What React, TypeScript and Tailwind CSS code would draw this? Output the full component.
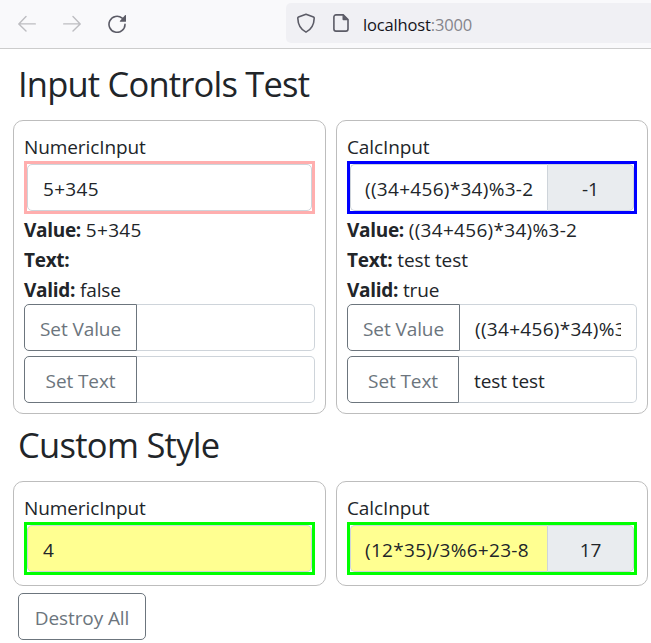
import type { ReactNode } from 'react';

function Toolbar() {
  return (
    <header className="flex h-[49px] border-b border-[#cccccc] bg-[#f9f9fb]">
      <div className="flex w-[286px] shrink-0 pl-[18px] pt-[15px]">
        <svg className="mr-[27px] h-[18px] w-[18px]" viewBox="0 0 18 18" fill="none" stroke="#bdbdc1" strokeWidth="1.4" strokeLinecap="round" strokeLinejoin="round">
          <path d="M17.3 8.9H.8M8 1.5.8 8.9 8 16.1" />
        </svg>
        <svg className="mr-[27px] h-[18px] w-[18px]" viewBox="0 0 18 18" fill="none" stroke="#bdbdc1" strokeWidth="1.4" strokeLinecap="round" strokeLinejoin="round">
          <path d="M.7 8.9h16.5M10 1.5l7.2 7.4-7.2 7.2" />
        </svg>
        <svg className="h-[18px] w-[18px]" viewBox="0 0 18 18" fill="none">
          <path d="M14.2 3.2A8 8 0 1 0 17 9.4" stroke="#5b5b66" strokeWidth="1.6" strokeLinecap="round" />
          <path d="M18 .6v5.6a.6.6 0 0 1-.6.6h-5.1c-.6 0-.8-.5-.4-.9L17 .2c.4-.4 1-.2 1 .4z" fill="#5b5b66" />
        </svg>
      </div>
      <div className="mt-[3px] flex h-10 flex-1 rounded-l-[5px] bg-[#f0f0f4] pl-[10px] pt-[9px]">
        <svg className="mt-px h-5 w-5" viewBox="0 0 20 20" fill="none" stroke="#5b5b66" strokeWidth="1.6" strokeLinejoin="round">
          <path d="M10 1.2 2.5 4Q1.7 4.3 1.8 5.2C2 12 4.800 16.500 10 19.100 15.200 16.500 18 12 18.200 5.200Q18.300 4.300 17.500 4Z" />
        </svg>
        <svg className="ml-[17px] mt-[2px] h-[18px] w-4" viewBox="0 0 16 18" fill="none">
          <path d="M3 .9h7.200L15 5.700V15a2.100 2.100 0 0 1-2.100 2.100H3A2.100 2.100 0 0 1 .9 15V3A2.100 2.100 0 0 1 3 .9Z" stroke="#5b5b66" strokeWidth="1.6" />
          <path d="M9.500 1v4.300q0 1 1 1H15Z" fill="#5b5b66" />
        </svg>
        <div className="ml-[14px] text-[16.5px] leading-[26px] tracking-[-0.15px] text-[#15141a]">
          localhost<span className="text-[#85858c]">:3000</span>
        </div>
      </div>
    </header>
  );
}

function Card({ title, children }: { title: string; children: ReactNode }) {
  return (
    <section className="min-w-0 rounded-[10px] border border-[#bdbdbd] p-[10px]">
      <div className="h-[30px] pt-px">{title}</div>
      {children}
    </section>
  );
}

// Expressions get slightly looser tracking than words.
const tracking = (value: string) => (/[+*]/.test(value) ? 'tracking-[0.3px]' : 'tracking-[-0.1px]');

function Info({ name, value }: { name: string; value: string }) {
  return (
    <div className="h-[30px] pt-px">
      <b className="font-bold tracking-[-0.3px]">{name}:</b> <span className={tracking(value)}>{value}</span>
    </div>
  );
}

function SetRow({ label, value, button = 'w-[113px]' }: { label: string; value: string; button?: string }) {
  return (
    <div className="flex h-[47px]">
      <button className={`${button} shrink-0 rounded-l-[5px] border border-[#6c757d] pt-[3px] text-[#6c757d]`}>{label}</button>
      <input
        readOnly
        value={value}
        className={`min-w-0 flex-1 rounded-r-[5px] border border-l-0 border-[#ced4da] px-[15px] pt-[3px] outline-none ${tracking(value)}`}
      />
    </div>
  );
}

function Control({ frame, fill, value, result }: { frame: string; fill: string; value: string; result?: string }) {
  return (
    <div className={`flex h-[53px] border-[3px] ${frame}`}>
      <input
        readOnly
        value={value}
        className={`min-w-0 flex-1 border border-[#ced4da] pt-[3px] outline-none ${tracking(value)} ${fill} ${result ? 'rounded-l-[5px] border-r-0 pl-[14px]' : 'rounded-[5px] pl-[15px]'}`}
      />
      {result && (
        <div className="flex w-[87px] shrink-0 items-center justify-center rounded-r-[5px] border border-[#ced4da] bg-[#e9ecef] pt-[3px]">{result}</div>
      )}
    </div>
  );
}

export default function App() {
  return (
    <div className="h-[643px] w-[651px] overflow-hidden bg-white font-['Open_Sans','Noto_Sans',sans-serif] text-[19px] leading-[30px] tracking-[-0.1px] text-[#212529]">
      <Toolbar />
      <h1 className="h-[71px] pl-[18px] pt-[13px] text-[34.5px] leading-[44px] tracking-[-0.8px]">Input Controls Test</h1>
      <div className="ml-[13px] grid grid-cols-[313px_312px] gap-[10px]">
        <Card title="NumericInput">
          <Control frame="border-[#ffaeae]" fill="bg-white" value="5+345" />
          <Info name="Value" value="5+345" />
          <Info name="Text" value="" />
          <Info name="Valid" value="false" />
          <div className="flex flex-col gap-[5px]">
            <SetRow label="Set Value" value="" />
            <SetRow label="Set Text" value="" />
          </div>
        </Card>
        <Card title="CalcInput">
          <Control frame="border-[#0000ff]" fill="bg-white" value="((34+456)*34)%3-2" result="-1" />
          <Info name="Value" value="((34+456)*34)%3-2" />
          <Info name="Text" value="test test" />
          <Info name="Valid" value="true" />
          <div className="flex flex-col gap-[5px]">
            <SetRow label="Set Value" value="((34+456)*34)%3-2" />
            <SetRow label="Set Text" value="test test" button="w-[112px]" />
          </div>
        </Card>
      </div>
      <h1 className="h-[67px] pl-[18px] pt-[9px] text-[34.5px] leading-[44px] tracking-[-0.7px]">Custom Style</h1>
      <div className="ml-[13px] grid grid-cols-[313px_312px] gap-[10px]">
        <Card title="NumericInput">
          <Control frame="border-[#00ff00]" fill="bg-[#ffff91]" value="4" />
        </Card>
        <Card title="CalcInput">
          <Control frame="border-[#00ff00]" fill="bg-[#ffff91]" value="(12*35)/3%6+23-8" result="17" />
        </Card>
      </div>
      <button className="ml-[18px] mt-[7px] block h-[47px] w-[128px] rounded-[5px] border border-[#6c757d] pt-[3px] text-[#6c757d]">Destroy All</button>
    </div>
  );
}
